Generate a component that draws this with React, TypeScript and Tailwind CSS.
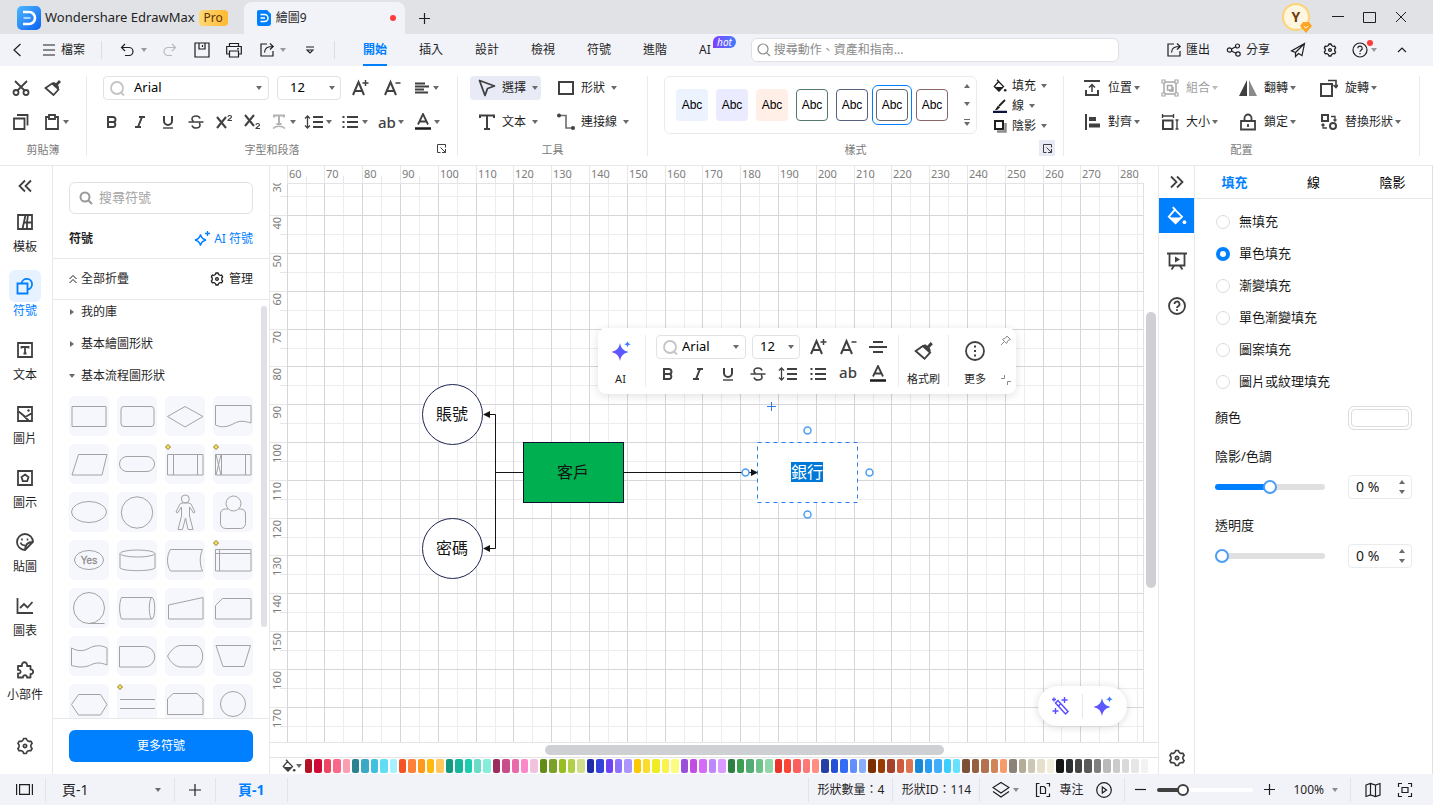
import React, { useEffect, useRef, useState } from 'react';
import { RiSettings3Line } from 'react-icons/ri';

interface IconProps {
  w?: number;
  h?: number;
  sw?: number;
  className?: string;
  children?: React.ReactNode;
}

const Ic: React.FC<IconProps> = ({ w = 18, h, sw = 2, className = '', children }) => (
  <svg
    width={w}
    height={h ?? w}
    viewBox={`0 0 ${w} ${h ?? w}`}
    fill="none"
    stroke="currentColor"
    strokeWidth={sw}
    className={`shrink-0 ${className}`}
    aria-hidden="true"
  >
    {children}
  </svg>
);

const Caret: React.FC<{ className?: string }> = ({ className = 'text-[#6b6b6b]' }) => (
  <svg width="6" height="4" viewBox="0 0 6 4" className={`shrink-0 ${className}`} aria-hidden="true">
    <path d="M0 0h6L3 4z" fill="currentColor" />
  </svg>
);

const Launcher = () => (
  <Ic w={9} sw={1}>
    <path d="M8.500 3.500V.5h-8v8h3M3.500 3.500l5 5M8.500 5v3.500H5" />
  </Ic>
);

const ExportIcon = () => (
  <Ic w={16} sw={1.2}>
    <path d="M8 2H2v12h12V9M5.500 10.500C5.500 6 9 4.500 14 4.500M11 1.500l3.200 3L11 7.500" />
  </Ic>
);

const BrushIcon: React.FC<{ w?: number }> = ({ w = 18 }) => (
  <svg width={w} height={w} viewBox="0 0 18 18" fill="none" stroke="currentColor" strokeWidth="1.7" className="shrink-0" aria-hidden="true">
    <path d="M1.500 9L8 4.500l6.500 6L9.500 16z" />
    <path d="M7.500 4L10 3l2 1.200L15 1l2 2-3 3 1 2-.5 3z" fill="currentColor" stroke="none" />
  </svg>
);

const BucketIcon: React.FC<{ w?: number }> = ({ w = 14 }) => (
  <svg width={w} height={w} viewBox="0 0 14 14" fill="none" stroke="currentColor" strokeWidth="1.3" className="shrink-0" aria-hidden="true">
    <path d="M5.500 2.500L10.500 7.500 6 12 1.300 7.500zM4 .8l2 2" />
    <path d="M1.500 8h9L6 12.500z" fill="currentColor" stroke="none" />
    <circle cx="12.200" cy="11.300" r="1.300" fill="currentColor" stroke="none" />
  </svg>
);

const LetterSize: React.FC<{ plus?: boolean }> = ({ plus }) => (
  <Ic>
    <path d="M2 16L7.500 3 13 16M4 12h7" />
    <path d={plus ? 'M11.500 4h6M14.500 1v6' : 'M12.500 4h5'} strokeWidth="1.500" />
  </Ic>
);

const BoldIcon = () => (
  <Ic w={14}><path d="M3 2h5a2.400 2.400 0 0 1 0 5H3zM3 7h5.500a2.600 2.600 0 0 1 0 5H3z" /></Ic>
);
const ItalicIcon = () => (
  <Ic w={14}><path d="M6 2h6M2 12h6M9 2L5 12" /></Ic>
);
const UnderlineIcon = () => (
  <Ic w={14}>
    <path d="M3 1v5a4 4 0 0 0 8 0V1" />
    <path d="M2 13h10" strokeWidth="1.400" />
  </Ic>
);
const StrikeIcon = () => (
  <Ic w={16} sw={1.6}><path d="M12 4.500C11.500 2.800 10 2 8 2 5.500 2 4 3.200 4 5c0 1 .6 1.700 1.500 2M4 11.500C4.500 13.200 6 14 8 14c2.500 0 4-1.200 4-3 0-.8-.3-1.400-.8-2M.5 8h15" /></Ic>
);
const LineSpacingIcon = () => (
  <Ic w={20} h={16} sw={1.8}>
    <path d="M9 3h10M9 8h10M9 13h10" />
    <path d="M3.500 2v12M1 4.500L3.500 2 6 4.500M1 11.500L3.500 14 6 11.500" strokeWidth="1.300" />
  </Ic>
);
const ListIcon = () => (
  <Ic w={16}><path d="M5 3h11M5 8h11M5 13h11M.5 3h2M.5 8h2M.5 13h2" strokeWidth="1.800" /></Ic>
);
const FontColorIcon = () => (
  <Ic>
    <path d="M4 11.500L9 1l5 10.500M5.800 8.500h6.400" strokeWidth="1.800" />
    <path d="M1 15.500h16" strokeWidth="2.500" stroke="#1a1a1a" />
  </Ic>
);

const Spark: React.FC<{ w?: number; id: string }> = ({ w = 20, id }) => (
  <svg width={w} height={w} viewBox="0 0 20 20" className="shrink-0" aria-hidden="true">
    <defs>
      <linearGradient id={id} x1="0" y1="1" x2="1" y2="0">
        <stop offset="0" stopColor="#7a45ff" />
        <stop offset="1" stopColor="#3d6bff" />
      </linearGradient>
    </defs>
    <path d="M9 2c1.200 5.500 3 7.300 8.500 9-5.500 1.700-7.300 3.500-8.500 9-1.200-5.500-3-7.300-8.500-9C6 9.300 7.800 7.500 9 2z" fill={`url(#${id})`} />
    <path d="M16.500 0c.4 2 1 2.600 3.300 3.200-2.300.6-2.900 1.200-3.300 3.300-.4-2.100-1-2.700-3.300-3.300C15.500 2.600 16.100 2 16.500 0z" fill="#3d7bff" />
  </svg>
);

const Divider = () => <span className="h-[18px] w-px shrink-0 bg-[#dcdde2]" />;

const TitleBar = () => (
  <header className="flex h-[34px] items-end bg-[#e1e2e6] text-[#1f1f1f]">
    <div className="flex h-8 items-center pl-[17px]">
      <svg width="24" height="24" viewBox="0 0 24 24" aria-hidden="true">
        <defs>
          <linearGradient id="brand" x1="0" y1="0" x2="1" y2="1">
            <stop offset="0" stopColor="#4db8ff" />
            <stop offset="1" stopColor="#0a62f5" />
          </linearGradient>
        </defs>
        <rect width="24" height="24" rx="5" fill="url(#brand)" />
        <path d="M6 6h6a6 6 0 0 1 0 12H6" fill="none" stroke="#fff" strokeWidth="2.600" />
        <path d="M6.500 12h7" stroke="#a9d4ff" strokeWidth="2.200" />
      </svg>
      <h1 className="ml-1 text-[13px]">Wondershare EdrawMax</h1>
      <span className="ml-1 h-4 rounded bg-gradient-to-r from-[#ffd873] to-[#ffb92b] px-[5px] text-xs leading-4 text-[#5c3205]">Pro</span>
    </div>
    <div className="ml-4 flex h-8 w-[161px] items-center rounded-t-lg bg-[#f2f3f9] px-3 text-xs">
      <svg width="16" height="16" viewBox="0 0 16 16" className="mr-1" aria-hidden="true">
        <path d="M3 0h8l4 4v9a3 3 0 0 1-3 3H3a2 2 0 0 1-2-2V2a2 2 0 0 1 2-2z" fill="#0080ff" />
        <path d="M4.500 4.500h4a3.500 3.500 0 0 1 0 7h-4M4.500 8h4.500" fill="none" stroke="#fff" strokeWidth="1.500" />
      </svg>
      <span>繪圖9</span>
      <span className="ml-auto mr-[-3px] h-1.5 w-1.5 rounded-full bg-[#ff3b3b]" />
    </div>
    <button className="ml-3.5 flex h-8 items-center" aria-label="新增">
      <Ic w={11} sw={1.200}><path d="M5.500 0v11M0 5.500h11" /></Ic>
    </button>
    <div className="ml-auto flex h-full items-center pr-[26px]">
      <div className="relative mr-[22px] flex h-7 w-7 items-center justify-center rounded-full border-2 border-[#ffd375] bg-[#fff6df] text-sm font-bold text-[#6b3d0c]">
        Y
        <svg width="12" height="11" viewBox="0 0 12 11" className="absolute -bottom-1 -right-1" aria-hidden="true">
          <path d="M3 .5h6L11.500 4 6 10.500.5 4z" fill="#ffa51f" stroke="#f59300" strokeWidth=".6" />
          <path d="M3.800 4L6 6.200 8.200 4" fill="none" stroke="#fff" />
        </svg>
      </div>
      <button aria-label="最小化"><Ic w={12} sw={1}><path d="M0 5.500h12" /></Ic></button>
      <button className="ml-[19px]" aria-label="最大化"><Ic w={13} h={11} sw={1}><path d="M.5.5h12v10H.5z" /></Ic></button>
      <button className="ml-[19px]" aria-label="關閉"><Ic w={12} sw={1}><path d="M1 1l10 10M11 1L1 11" /></Ic></button>
    </div>
  </header>
);

const menuTabs = ['開始', '插入', '設計', '檢視', '符號', '進階'];

const MenuBar: React.FC<{ tab: string; onTab: (t: string) => void }> = ({ tab, onTab }) => (
  <nav className="flex h-8 items-center bg-[#f2f3f9] pl-3 pr-[26px] text-xs text-[#1f1f1f]">
    <button aria-label="返回"><Ic w={10} h={14} sw={1.200}><path d="M8.500 1L2 7l6.500 6" /></Ic></button>
    <button className="ml-[21px] flex items-center gap-1.5">
      <Ic w={12} sw={1.200}><path d="M0 1h12M0 6h12M0 11h12" /></Ic>
      檔案
    </button>
    <div className="ml-4 flex items-center"><Divider /></div>
    <button className="ml-[18px] flex items-center gap-[7px]" aria-label="復原">
      <Ic w={14} sw={1.200}><path d="M5 1L1.500 4.500 5 8M1.500 4.500H9a4 4 0 0 1 0 8H5" /></Ic>
      <Caret className="text-[#999]" />
    </button>
    <button className="ml-4 text-[#b9bac0]" aria-label="重做">
      <Ic w={14} sw={1.200}><path d="M9 1l3.500 3.500L9 8M12.500 4.500H5a4 4 0 0 0 0 8h4" /></Ic>
    </button>
    <button className="ml-[17px]" aria-label="儲存">
      <Ic w={16} sw={1.200}><path d="M1 1h14v14H1zM5 1v6h6V1M8.500 3v2" /></Ic>
    </button>
    <button className="ml-4" aria-label="列印">
      <Ic w={16} sw={1.200}><path d="M3.500 4.500v-3h9v3M3.500 12H.7V4.500h14.600V12h-2.800M3.500 9h9v6h-9zM11 6.800h2" /></Ic>
    </button>
    <button className="ml-[17px] flex items-center gap-[5px]" aria-label="分享檔案">
      <ExportIcon />
      <Caret className="text-[#999]" />
    </button>
    <button className="ml-5" aria-label="自訂工具列">
      <Ic w={8} sw={1.100}><path d="M0 1h8M1 4l3 3 3-3z" /></Ic>
    </button>
    <div className="ml-5 flex items-center"><Divider /></div>
    <div className="ml-7 flex gap-8">
      {menuTabs.map((t) => (
        <button
          key={t}
          onClick={() => onTab(t)}
          className={`h-8 border-b-2 pt-0.5 ${tab === t ? 'border-[#0080ff] font-bold text-[#0080ff]' : 'border-transparent'}`}
        >
          {t}
        </button>
      ))}
      <button className="relative h-8">
        AI
        <span className="absolute left-3.5 top-0.5 h-3 rounded-full rounded-bl-none bg-gradient-to-r from-[#7a3dff] to-[#3d7bff] px-1 text-[10px] italic leading-3 text-white">hot</span>
      </button>
    </div>
    <label className="ml-10 flex h-6 flex-1 items-center gap-[3px] rounded-md border border-[#dfe0e6] bg-white px-[5px]">
      <Ic w={14} sw={1.200} className="text-[#8c8c8c]"><circle cx="6" cy="6" r="5" /><path d="M9.800 9.800L13 13" /></Ic>
      <input type="text" aria-label="搜尋動作" placeholder="搜尋動作、資產和指南..." className="w-full outline-none placeholder:text-[#8a8a8a]" />
    </label>
    <button className="ml-[47px] flex items-center gap-1"><ExportIcon />匯出</button>
    <button className="ml-4 flex items-center gap-1">
      <Ic w={16} sw={1.200}>
        <circle cx="3.500" cy="8" r="2.200" /><circle cx="11.500" cy="4" r="2" /><circle cx="12" cy="12" r="2.200" /><path d="M5.500 7l4.200-2.200M5.500 9l4.500 2.200" />
      </Ic>
      分享
    </button>
    <button className="ml-5" aria-label="傳送">
      <Ic w={16} sw={1.200}><path d="M14.500 1.500L1.500 9l4 1.500v4l3-3 3.500 2zM14.500 1.500L5.500 10.500" /></Ic>
    </button>
    <button className="ml-4" aria-label="設定"><RiSettings3Line size={16} /></button>
    <button className="relative ml-3.5 flex items-center gap-[3px]" aria-label="說明">
      <Ic w={16} sw={1.200}><circle cx="8" cy="8" r="7" /><path d="M5.800 6.300a2.200 2.200 0 1 1 3.200 2c-.7.4-1 .8-1 1.500M8 11v1.300" /></Ic>
      <Caret className="text-[#999]" />
      <span className="absolute -top-0.5 right-1 h-1.5 w-1.5 rounded-full bg-[#ff3b3b]" />
    </button>
    <button className="ml-5" aria-label="收合功能區"><Ic w={10} h={6} sw={1.200}><path d="M1 5l4-4 4 4" /></Ic></button>
  </nav>
);

interface GroupProps {
  title: string;
  className?: string;
  launcher?: 'plain' | 'filled';
  children: React.ReactNode;
}

const Group: React.FC<GroupProps> = ({ title, className = '', launcher, children }) => (
  <section className={`relative flex h-20 flex-col border-r border-[#ebebee] ${className}`}>
    {children}
    <p className="mt-auto text-center text-[11px] leading-3 text-[#7a7a7a]">{title}</p>
    {launcher && (
      <button
        className={`absolute bottom-0 right-2 flex h-4 w-4 items-center justify-center text-[#404040] ${launcher === 'filled' ? 'bg-[#e8ebf5]' : ''}`}
        aria-label={`${title}設定`}
      >
        <Launcher />
      </button>
    )}
  </section>
);

interface ToolProps {
  label: string;
  icon: React.ReactNode;
  className?: string;
}

const ToolButton: React.FC<ToolProps> = ({ label, icon, className = '' }) => (
  <button className={`flex h-6 items-center gap-1.5 rounded pl-2 ${className}`}>
    {icon}
    {label}
    <Caret />
  </button>
);

const ArrangeButton: React.FC<ToolProps> = ({ label, icon, className = '' }) => (
  <button className={`flex h-6 items-center gap-0.5 ${className}`}>
    <span className="mr-[5px] text-[#404040]">{icon}</span>
    {label}
    <Caret />
  </button>
);

const DropIcon: React.FC<{ label: string; className?: string; children: React.ReactNode }> = ({ label, className = '', children }) => (
  <button className={`flex h-6 items-center ${className}`} aria-label={label}>
    {children}
    <Caret />
  </button>
);

const FontSelect: React.FC<{ className?: string; selectClass?: string }> = ({ className = '', selectClass = 'pl-[9px]' }) => (
  <label className={`flex h-6 items-center rounded border border-[#e2e2e6] bg-white pl-1.5 pr-1.5 ${className}`}>
    <Ic w={15} sw={1.800} className="text-[#c4c4c8]"><circle cx="7" cy="7" r="6" /><path d="M11 11.500l3 3" /></Ic>
    <select aria-label="字型" className={`w-full appearance-none text-[13px] text-black outline-none ${selectClass}`}>
      <option>Arial</option>
    </select>
    <Caret />
  </label>
);

const SizeSelect: React.FC<{ className?: string }> = ({ className = '' }) => (
  <label className={`flex h-6 items-center rounded border border-[#e2e2e6] bg-white pr-[5px] ${className}`}>
    <select aria-label="字型大小" className="w-full appearance-none text-[13px] text-black outline-none">
      <option>12</option>
    </select>
    <Caret />
  </label>
);

const styleSwatches = [
  'bg-[#ecf3ff]',
  'bg-[#ebebff]',
  'bg-[#ffefe6]',
  'border border-[#53786f]',
  'border border-[#56617f]',
  'border border-[#666]',
  'border border-[#8a6666]',
];

const Ribbon = () => {
  const [style, setStyle] = useState(5);
  return (
    <div className="flex h-[100px] border-b border-[#e8e8ea] bg-white pt-2.5 pr-[13px] text-xs text-[#1f1f1f]">
      <Group title="剪貼簿" className="w-[87px] gap-2.5">
        <div className="flex h-6 items-center gap-3.5 pl-3 text-[#404040]">
          <button aria-label="剪下">
            <Ic sw={1.800}><circle cx="4" cy="13.500" r="2.500" /><circle cx="14" cy="13.500" r="2.500" /><path d="M3 2l9.500 9.500M15 2L5.500 11.500" /></Ic>
          </button>
          <button aria-label="格式刷"><BrushIcon /></button>
        </div>
        <div className="flex h-6 items-center gap-3.5 pl-3 text-[#404040]">
          <button aria-label="複製"><Ic sw={1.800}><path d="M2 5.500h10.500V16H2zM5 2h10.500v10.500" /></Ic></button>
          <button aria-label="貼上" className="flex items-center gap-[3px]">
            <Ic w={16} sw={1.800}><path d="M5 3H2v12h12V3h-3M5 1h6v4H5z" /></Ic>
            <Caret />
          </button>
        </div>
      </Group>

      <Group title="字型和段落" className="w-[371px] gap-2.5" launcher="plain">
        <div className="flex h-6 items-center pl-4 text-[#404040]">
          <FontSelect className="w-[166px]" />
          <SizeSelect className="ml-2 w-16 pl-3" />
          <button className="ml-2.5" aria-label="放大字型"><LetterSize plus /></button>
          <button className="ml-3.5" aria-label="縮小字型"><LetterSize /></button>
          <DropIcon label="對齊方式" className="ml-3.5 gap-1">
            <Ic w={14}><path d="M0 2.500h10M0 5.500h14M0 8.500h9M0 11.500h13" strokeWidth="1.800" /></Ic>
          </DropIcon>
        </div>
        <div className="flex h-6 items-center pl-[11px] text-[#404040]">
          <button className="flex w-7 justify-center" aria-label="粗體"><BoldIcon /></button>
          <button className="flex w-7 justify-center" aria-label="斜體"><ItalicIcon /></button>
          <button className="flex w-7 justify-center" aria-label="底線"><UnderlineIcon /></button>
          <button className="flex w-7 justify-center" aria-label="刪除線"><StrikeIcon /></button>
          <button className="flex w-7 justify-center" aria-label="上標">
            <Ic><path d="M2 4l9 11M11 4L2 15" /><path d="M13 4c0-2 3.500-2 3.500 0 0 1-3.500 2.500-3.500 3.500H17" strokeWidth="1.200" /></Ic>
          </button>
          <button className="flex w-7 justify-center" aria-label="下標">
            <Ic><path d="M2 2l9 11M11 2L2 13" /><path d="M13 12c0-2 3.500-2 3.500 0 0 1-3.500 2.500-3.500 3.500H17" strokeWidth="1.200" /></Ic>
          </button>
          <DropIcon label="文字效果" className="ml-1 gap-0.5 text-[#b3b3b3]">
            <Ic><path d="M4 4.500V2.500h10v2M9 2.500V11M6.500 11h5" /><path d="M3 15.500c3-3 9-3 12 0" strokeWidth="1.500" /></Ic>
          </DropIcon>
          <DropIcon label="行距" className="ml-2 gap-0.5"><LineSpacingIcon /></DropIcon>
          <DropIcon label="項目符號" className="ml-2.5 gap-1"><ListIcon /></DropIcon>
          <DropIcon label="大小寫" className="ml-2.5 gap-0.5"><span className="text-[15px] font-medium">ab</span></DropIcon>
          <DropIcon label="字型顏色" className="ml-2.5 gap-0.5"><FontColorIcon /></DropIcon>
        </div>
      </Group>

      <Group title="工具" className="w-[190px] gap-2.5">
        <div className="flex items-center gap-2 pl-3">
          <ToolButton label="選擇" className="w-[71px] bg-[#e8ebf5]" icon={<Ic className="text-[#404040]"><path d="M1.500 1.500l15 5.500-7 2.500-2.500 7z" strokeLinejoin="round" strokeWidth="1.800" /></Ic>} />
          <ToolButton label="形狀" icon={<Ic className="text-[#404040]"><path d="M2 3h14v12H2z" /></Ic>} />
        </div>
        <div className="flex items-center gap-2 pl-3">
          <ToolButton label="文本" className="w-[71px]" icon={<Ic className="text-[#404040]"><path d="M2 5V2.500h14V5M9 2.500V16M6 16h6" /></Ic>} />
          <ToolButton
            label="連接線"
            icon={
              <Ic className="text-[#6b6b6b]">
                <path d="M3 2.500h6V15h6" strokeWidth="1.600" />
                <circle cx="2" cy="2.500" r="2" fill="#404040" stroke="none" /><circle cx="16" cy="15" r="2" fill="#404040" stroke="none" />
              </Ic>
            }
          />
        </div>
      </Group>

      <Group title="樣式" className="min-w-[416px] flex-1" launcher="filled">
        <div className="flex pl-4 pr-4">
          <div className="flex h-[58px] flex-1 items-center rounded-md border border-[#ebebee] pl-[7px] pr-1.5">
            {styleSwatches.map((s, i) => (
              <button
                key={s}
                onClick={() => setStyle(i)}
                className={`flex h-10 w-10 items-center justify-center rounded-md border ${style === i ? 'border-[#0080ff]' : 'border-transparent'}`}
              >
                <span className={`flex h-8 w-8 shrink-0 items-center justify-center rounded font-['Liberation_Sans',sans-serif] text-black ${s}`}>Abc</span>
              </button>
            ))}
            <div className="ml-auto flex h-full flex-col items-center justify-between py-[7px] text-[#6b6b6b]">
              <button aria-label="上一列" className="rotate-180"><Caret /></button>
              <button aria-label="下一列"><Caret /></button>
              <button aria-label="更多樣式"><Ic w={6} h={7} sw={1}><path d="M0 .5h6" /><path d="M0 3h6L3 7z" fill="currentColor" stroke="none" /></Ic></button>
            </div>
          </div>
          <div className="ml-4 flex h-[58px] flex-col justify-between">
            <button className="flex h-5 items-center gap-[5px] leading-5"><BucketIcon />填充<Caret /></button>
            <button className="flex h-5 items-center gap-[5px] leading-5">
              <Ic w={14}><path d="M12 1L6 7" strokeWidth="1.800" /><path d="M5 6.500l2 2-3 2.500H2z" fill="currentColor" stroke="none" /><path d="M0 13h14" stroke="#0b1340" strokeWidth="2.500" /></Ic>
              線<Caret />
            </button>
            <button className="flex h-5 items-center gap-[5px] leading-5">
              <Ic w={14}><path d="M4 12.500h8.500V4" stroke="#8c8c8c" strokeWidth="2.500" /><path d="M2 2h8v8H2z" /></Ic>
              陰影<Caret />
            </button>
          </div>
        </div>
      </Group>

      <Group title="配置" className="w-[356px]">
        <div className="grid grid-cols-[78px_78px_81px_auto] gap-y-2.5 pl-[19px]">
          <ArrangeButton label="位置" icon={<Ic><path d="M1 2h16M3 11v5h12v-5M3 16h12" /><path d="M9 13V6M6 8.500L9 5.500l3 3" strokeWidth="1.500" /></Ic>} />
          <ArrangeButton label="組合" className="opacity-45" icon={<Ic><path d="M3 3h12v12H3z" strokeWidth="1.500" /><path d="M6.500 6.500H11V11H6.500zM8 12h4V8" strokeWidth="1.500" /><path d="M1 1h3v3H1zM14 1h3v3h-3zM1 14h3v3H1zM14 14h3v3h-3z" fill="#fff" strokeWidth="1.200" /></Ic>} />
          <ArrangeButton label="翻轉" icon={<Ic><path d="M8 1v16H0z" fill="currentColor" stroke="none" /><path d="M10 1v16h8z" fill="#8a8a8a" stroke="none" /></Ic>} />
          <ArrangeButton label="旋轉" icon={<Ic><path d="M1 5h11v12H1z" /><path d="M8 1.500h8V8M13.500 6l2.500 2.500L18 6" strokeWidth="1.600" /></Ic>} />
          <ArrangeButton label="對齊" icon={<Ic><path d="M3 1v16" /><path d="M6 6h7M6 12.500h11" strokeWidth="4" /></Ic>} />
          <ArrangeButton label="大小" icon={<Ic><path d="M2 7.500h9.500V16H2z" /><path d="M1 3h12M1.500 1v4M12.500 1v4M16 7v9M14.500 7h3M14.500 16h3" strokeWidth="1.400" /></Ic>} />
          <ArrangeButton label="鎖定" icon={<Ic><path d="M2 8h14v8.500H2zM5.500 8V5a3.500 3.500 0 0 1 7 0v3M9 11v3" strokeWidth="1.800" /></Ic>} />
          <ArrangeButton label="替換形狀" icon={<Ic><path d="M2 2h6v6H2z" /><circle cx="13" cy="13" r="3" /><path d="M11 3.500h4V8M13.500 6.500L15 8l1.500-1.500M7 15H3v-4M1.500 12.500L3 11l1.500 1.500" strokeWidth="1.300" /></Ic>} />
        </div>
      </Group>
    </div>
  );
};

const navItems = [
  { label: '模板', icon: <path d="M2 2h14v14H2zM9.500 2L6.500 16M8 9.500h8M12 2l-1 7.500V16" strokeWidth="1.800" /> },
  { label: '符號', icon: <><path d="M1.500 6.500h10v10h-10z" strokeWidth="1.800" /><path d="M5.500 6.500a5.300 5.300 0 1 1 6 6" strokeWidth="1.800" /></> },
  { label: '文本', icon: <path d="M2 2h14v14H2zM5.500 7.500V6h7v1.500M9 6v6.500M7.500 12.500h3" strokeWidth="1.800" /> },
  { label: '圖片', icon: <><path d="M2 2h14v14H2zM2 6l5 4 2.500 2L16 8M7 10l6 6" strokeWidth="1.800" /><circle cx="12.500" cy="5.500" r="1.200" fill="currentColor" stroke="none" /></> },
  { label: '圖示', icon: <path d="M2 2h14v14H2zM9 5.500l3.500 2.600-1.300 4h-4.400l-1.300-4z" strokeWidth="1.800" /> },
  { label: '貼圖', icon: <><path d="M17 9a8 8 0 1 0-8 8zM17 9c-5 0-8 3-8 8" strokeWidth="1.800" /><path d="M4.500 9.500c1 2.500 3 3 4.500 2.700M6 5.500v2M11.500 5.500v2" strokeWidth="1.600" /></> },
  { label: '圖表', icon: <path d="M1.500 1v15H17M4 11l4-4 3.500 3.500L16.500 5" strokeWidth="1.800" /> },
  { label: '小部件', icon: <path d="M2 5h4c-1-5 6-5 5 0h3.500v3.500c3.500-.5 3.500 5 0 4.500V16.500H11c.5-3-4.500-3-4 0H2v-4c3.500.5 3.500-4 0-3.500z" strokeWidth="1.800" strokeLinejoin="round" /> },
];

const SideNav: React.FC<{ active: string; onSelect: (s: string) => void }> = ({ active, onSelect }) => (
  <nav className="flex w-[53px] shrink-0 flex-col border-r border-[#e8e8ea] bg-white pr-0.5 text-xs text-[#1f1f1f]">
    <button className="flex h-10 items-center justify-center text-[#404040]" aria-label="收合">
      <Ic w={14}><path d="M7 1.500L1.500 7 7 12.500M13 1.500L7.500 7l5.500 5.500" strokeWidth="1.800" /></Ic>
    </button>
    <div className="flex min-h-0 flex-col gap-3.5 overflow-hidden">
      {navItems.map((n) => (
        <button key={n.label} onClick={() => onSelect(n.label)} className={`flex flex-col items-center ${active === n.label ? 'text-[#0080ff]' : ''}`}>
          <span className={`flex h-8 w-8 items-center justify-center rounded-md ${active === n.label ? 'bg-[#e6f2ff]' : 'text-[#404040]'}`}>
            <Ic>{n.icon}</Ic>
          </span>
          <span className="whitespace-nowrap leading-[18px]">{n.label}</span>
        </button>
      ))}
    </div>
    <button className="mt-auto flex h-14 items-center justify-center text-[#404040]" aria-label="設定"><RiSettings3Line size={20} /></button>
  </nav>
);

const shapes: { draw: React.ReactNode; mark?: boolean }[] = [
  { draw: <path d="M3 10.500h34v20H3z" /> },
  { draw: <rect x="4" y="10.500" width="33" height="20" rx="3" /> },
  { draw: <path d="M2.500 20.500L20 10.500l18 10L20 31z" /> },
  { draw: <path d="M2.500 9.500H38V27c-7-2-11-3-18 1-7 3.500-12 3.500-17.500 1z" /> },
  { draw: <path d="M9.500 10.500H38L33 31H3z" /> },
  { draw: <rect x="2.500" y="12.500" width="35" height="15" rx="7.500" /> },
  { mark: true, draw: <path d="M2.500 10.500H38V31H2.500zM8.500 10.500V31M32.500 10.500V31" /> },
  { mark: true, draw: <path d="M2.500 10.500H38V31H2.500zM8.500 10.500V31M32.500 10.500V31M3 10.500L8 31M8 10.500L3 31" /> },
  { draw: <ellipse cx="20" cy="20" rx="17.500" ry="10.500" /> },
  { draw: <circle cx="20" cy="20.500" r="15.700" /> },
  { draw: <><circle cx="20.300" cy="7" r="4" /><path d="M15 12l-4 8 1.500 1 4-6v9l-3.500 13.500h4.500L20.500 26l2.500 11.500h5L24.500 24v-9l4 6 1.500-1-4-8c-1.500-1.500-9.500-1.500-11 0z" /></> },
  { draw: <><circle cx="20.500" cy="11.500" r="7.500" /><path d="M15 17h-3a5 5 0 0 0-4.500 5v9.500a5 5 0 0 0 5 5h15a5 5 0 0 0 5-5V22a5 5 0 0 0-4.500-5h-2" /></> },
  { draw: <><ellipse cx="20" cy="20" rx="14.500" ry="9.500" /><text x="20" y="24" textAnchor="middle" fontSize="10" fill="#8c8c8c" stroke="#8c8c8c" strokeWidth=".3" className="font-['Liberation_Sans',sans-serif]">Yes</text></> },
  { draw: <><ellipse cx="20.500" cy="13.500" rx="17.500" ry="3.500" /><path d="M3 13.500V28c3 3.500 32 3.500 35 0V13.500" /></> },
  { draw: <path d="M5.500 9.500h32c-3 6-3 15 0 21.500h-32c-4-6-4-15.500 0-21.500z" /> },
  { mark: true, draw: <path d="M2.500 9.500H38V31H2.500zM2.500 13.500H38M6.500 9.500V31" /> },
  { draw: <><circle cx="20" cy="20" r="15.500" /><path d="M20 35.500h15.500" /></> },
  { draw: <><path d="M35 9.500H4.500c-2.500 5-2.500 16 0 21.500H35" /><ellipse cx="35" cy="20.250" rx="2.700" ry="10.700" /></> },
  { draw: <path d="M3.500 17L38 9.500V31H3.500z" /> },
  { draw: <path d="M9.500 10.500H38V31H2.500V17.500z" /> },
  { draw: <path d="M2.500 12c6 3 11 4 18 0 6-3 12-3 17.500 0v17c-6-2.500-11-3-17.500.5-7 2.500-12 1.500-18 0z" /> },
  { draw: <path d="M2.500 10.500h25a10.250 10.250 0 0 1 0 20.500h-25z" /> },
  { draw: <path d="M2.500 20C7 13 11 10 15 9.500h17c7.500 3 7.500 18.500 0 21.500H15C10 30 6 27 2.500 20z" /> },
  { draw: <path d="M3 9.500h34.500L31 30.500H10z" /> },
  { draw: <path d="M2.500 20.500l7-10h22l6.500 10L31.500 31h-22z" /> },
  { mark: true, draw: <path d="M3 15.500h35M3 24.500h35" /> },
  { draw: <path d="M8 9.500h24l6 5.500v15.500H2.500V15z" /> },
  { draw: <circle cx="20" cy="20" r="12.500" /> },
];

const SymbolPanel = () => (
  <aside className="flex w-[217px] shrink-0 flex-col border-r border-[#e8e8ea] bg-white text-xs text-[#1f1f1f]">
    <div className="flex h-[93px] shrink-0 flex-col border-b border-[#e8e8ea] px-4 pt-4">
      <label className="flex h-8 items-center gap-1.5 rounded-md border border-[#e2e2e6] px-[9px]">
        <Ic w={14} sw={2} className="text-[#999]"><circle cx="6" cy="6" r="4.500" /><path d="M9.500 9.500l3.500 3.500" /></Ic>
        <input type="text" aria-label="搜尋符號" placeholder="搜尋符號" className="w-full text-[13px] outline-none placeholder:text-[#a3a3a3]" />
      </label>
      <div className="mt-[17px] flex items-center justify-between">
        <h2 className="font-bold">符號</h2>
        <button className="flex items-center gap-1 text-[#0080ff]">
          <Ic w={16} sw={1.300}>
            <path d="M6.500 3.500c.8 3.500 2 4.700 5.500 5.500-3.500.8-4.700 2-5.500 5.500C5.700 11 4.500 9.800 1 9c3.500-.8 4.700-2 5.500-5.500zM13.500 0v5M11 2.500h5" />
          </Ic>
          AI 符號
        </button>
      </div>
    </div>
    <div className="flex h-[41px] shrink-0 items-center justify-between border-b border-[#e8e8ea] px-4">
      <button className="flex items-center gap-1">
        <Ic w={8} h={10} sw={1}><path d="M.5 5L4 1.500 7.500 5M.5 9L4 5.500 7.500 9" /></Ic>
        全部折疊
      </button>
      <button className="flex items-center gap-1"><RiSettings3Line size={16} />管理</button>
    </div>
    <div className="flex min-h-0 flex-1">
      <div className="flex min-h-0 flex-1 flex-col gap-2 overflow-hidden pl-4">
        {['我的庫', '基本繪圖形狀', '基本流程圖形狀'].map((s, i) => (
          <button key={s} className="flex h-6 shrink-0 items-center gap-1.5">
            <span className={`flex w-1.5 justify-center ${i < 2 ? '-rotate-90' : ''}`}><Caret /></span>
            {s}
          </button>
        ))}
        <div className="grid shrink-0 grid-cols-[repeat(4,40px)] gap-2">
          {shapes.map((s, i) => (
            <button key={i} aria-label={`形狀 ${i + 1}`} className="h-10 w-10 rounded-md bg-[#f6f7fc]">
              <svg width="40" height="40" viewBox="0 0 40 40" fill="none" stroke="#a3a3a3" aria-hidden="true">
                {s.draw}
                {s.mark && <path d="M3 .5L5.500 3 3 5.500.5 3z" fill="#ffe14d" stroke="#8a7a3a" />}
              </svg>
            </button>
          ))}
        </div>
      </div>
      <div className="w-2 pt-1.5"><div className="h-[321px] w-1.5 rounded-full bg-[#e0e0e6]" /></div>
    </div>
    <div className="h-14 shrink-0 border-t border-[#e8e8ea] px-4 pt-[11px]">
      <button className="h-8 w-full rounded-md bg-[#0080ff] text-white">更多符號</button>
    </div>
  </aside>
);

// 10 mm at 96 dpi
const STEP = 37.795;
const gx = (k: number) => Math.floor(0.2 + STEP * k) + 0.5;
const gy = (k: number) => Math.floor(STEP * k - 4.995) + 0.5;
const range = (n: number) => Array.from({ length: n }, (_, k) => k);
const columns = (width: number) => range(Math.ceil(width / STEP));
const rows = (height: number) => range(Math.ceil((height + 4.995) / STEP));

const RulerTop: React.FC<{ width: number }> = ({ width }) => (
  <svg className="h-[17px] min-w-0 flex-1 overflow-hidden" aria-hidden="true">
    {columns(width).map((k) => (
      <g key={k}>
        <path d={`M${gx(k)} 0V17`} stroke="#e6e6e9" />
        <path d={`M${gx(k + 0.5)} 10V17`} stroke="#e6e6e9" />
        {gx(k) + 20 < width && <text x={gx(k) + 1.5} y="12" fontSize="11" fill="#7d7d7d">{60 + k * 10}</text>}
      </g>
    ))}
  </svg>
);

const RulerLeft: React.FC<{ height: number }> = ({ height }) => (
  <svg className="h-full w-[17px] shrink-0 overflow-hidden" aria-hidden="true">
    {rows(height).map((k) => (
      <g key={k}>
        <path d={`M0 ${gy(k)}H17`} stroke="#e6e6e9" />
        <path d={`M10 ${gy(k + 0.5)}H17`} stroke="#e6e6e9" />
        {gy(k) + 20 < height && (
          <text textAnchor="end" fontSize="11" fill="#7d7d7d" transform={`translate(11 ${gy(k) + 1.5}) rotate(-90)`}>{30 + k * 10}</text>
        )}
      </g>
    ))}
  </svg>
);

const Diagram: React.FC<{ width: number; height: number }> = ({ width, height }) => (
  <svg className="absolute inset-0 h-full w-full" role="img" aria-label="繪圖9">
    {columns(width).map((k) => <path key={k} d={`M${gx(k + 0.5)} 0V${height}`} stroke="#ededef" />)}
    {rows(height).map((k) => <path key={k} d={`M0 ${gy(k + 0.5)}H${width}`} stroke="#ededef" />)}
    {columns(width).map((k) => <path key={k} d={`M${gx(k)} 0V${height}`} stroke="#d6d6d8" />)}
    {rows(height).map((k) => <path key={k} d={`M0 ${gy(k)}H${width}`} stroke="#d6d6d8" />)}
    <path d={`M0 .5H${width}`} stroke="#e4e4e7" />
    <path d="M236.500 289.500h-28M208.500 231.500v134M208.500 231.500h-7M208.500 365.500h-7M337 289.500h128" fill="none" stroke="#141414" />
    <path d="M196 231.500l7-3.500v7zM196 365.500l7-3.500v7zM471 289.500l-7-3.500v7z" fill="#141414" />
    <g fill="#fff" stroke="#1c2450">
      <circle cx="165.500" cy="231.500" r="30" />
      <circle cx="165.500" cy="365.500" r="30" />
    </g>
    <rect x="236.500" y="259.500" width="100" height="60" fill="#00b050" stroke="#0d1233" />
    <rect x="470.500" y="259.500" width="100" height="60" fill="#fff" stroke="#2a7de1" strokeDasharray="4 4" />
    <rect x="504" y="279" width="32" height="20" fill="#0078d7" />
    <g fontSize="16" textAnchor="middle" fill="#141414">
      <text x="165" y="237">賬號</text>
      <text x="165" y="371">密碼</text>
      <text x="286" y="295">客戶</text>
      <text x="520" y="295" fill="#fff">銀行</text>
    </g>
    <g fill="#fff" stroke="#4c9ff5" strokeWidth="1.500">
      <circle cx="520.500" cy="247.500" r="3.500" />
      <circle cx="458.500" cy="289.500" r="3.500" />
      <circle cx="582.500" cy="289.500" r="3.500" />
      <circle cx="520.500" cy="331.500" r="3.500" />
    </g>
    <path d="M480 223.500h9M484.500 219v9" stroke="#2a7de1" />
  </svg>
);

const FloatBar = () => (
  <div className="absolute left-[311px] top-[145px] flex h-[66px] w-[418px] rounded-lg bg-white py-[7px] text-[11px] text-[#1f1f1f] shadow-[0_2px_10px_rgba(0,0,0,0.12)]">
    <button className="flex w-12 flex-col items-center justify-between border-r border-[#ebebee] pt-1.5 pr-0.5">
      <Spark id="floatAi" />
      <span className="leading-4">AI</span>
    </button>
    <div className="flex w-[253px] flex-col gap-[3px] border-r border-[#ebebee] text-[#404040]">
      <div className="flex h-6 items-center pl-2.5">
        <FontSelect className="w-[90px]" selectClass="pl-1" />
        <SizeSelect className="ml-1.5 w-12 pl-[7px]" />
        <button className="ml-[9px]" aria-label="放大字型"><LetterSize plus /></button>
        <button className="ml-3" aria-label="縮小字型"><LetterSize /></button>
        <button className="ml-3" aria-label="置中"><Ic><path d="M4 4h10M0 9h18M4 14h10" strokeWidth="1.800" /></Ic></button>
      </div>
      <div className="flex h-6 items-center pl-[7px]">
        <button className="flex w-[30px] justify-center" aria-label="粗體"><BoldIcon /></button>
        <button className="flex w-[30px] justify-center" aria-label="斜體"><ItalicIcon /></button>
        <button className="flex w-[30px] justify-center" aria-label="底線"><UnderlineIcon /></button>
        <button className="flex w-[30px] justify-center" aria-label="刪除線"><StrikeIcon /></button>
        <button className="flex w-[30px] justify-center" aria-label="行距"><LineSpacingIcon /></button>
        <button className="flex w-[30px] justify-center" aria-label="項目符號"><ListIcon /></button>
        <button className="flex h-6 w-[30px] justify-center text-[15px] font-medium leading-5" aria-label="大小寫">ab</button>
        <button className="flex w-[30px] justify-center" aria-label="字型顏色"><FontColorIcon /></button>
      </div>
    </div>
    <button className="flex w-[50px] flex-col items-center justify-between border-r border-[#ebebee] pt-1.5">
      <span className="text-[#404040]"><BrushIcon w={20} /></span>
      <span className="leading-4">格式刷</span>
    </button>
    <button className="flex w-[52px] flex-col items-center justify-between pt-1.5">
      <Ic w={20} className="text-[#404040]">
        <circle cx="10" cy="10" r="9" strokeWidth="1.800" />
        <path d="M10 4.500v2M10 9v2M10 13.500v2" />
      </Ic>
      <span className="leading-4">更多</span>
    </button>
    <div className="flex flex-1 flex-col justify-between pb-0.5 text-[#8c8c8c]">
      <button aria-label="釘選"><Ic w={10} sw={1}><path d="M6 1l3.500 3.500L7 5.500 5.500 8.500l-4-4L4.500 3zM3.500 6.500L0 10" /></Ic></button>
      <button aria-label="精簡"><Ic w={10} sw={1}><path d="M0 3.500h3.500V0M10 6.500H6.500V10" /></Ic></button>
    </div>
  </div>
);

const palette =
  '#b31022 #cf0a36 #ec4864 #f9688a #fb9eb0 #2a8291 #3aa9c5 #41c1e0 #60dcf3 #a6f0ff #f35325 #ff8038 #ff981c #ffb90f #ffc75e #129a80 #17b59b #1bccb1 #6adbc6 #84eedb #9b2b60 #c84e8b #e969ab #fb89ca #f1c2de #628c17 #7aa228 #98bf22 #b1d047 #d0df8c #1f2caa #3442dc #6e43f5 #8f72fb #ac96fb #fbc900 #fcdc2a #efeb25 #f9f34b #fcfc80 #9a50d8 #c34de3 #d46cf7 #bf87fd #d99bff #2d8044 #3a9f50 #51ad74 #6cc288 #92d7a9 #ea3329 #fb4537 #fd5f60 #ff7878 #ff8d84 #2440a4 #2850d6 #336cf5 #648efb #88aef9 #7a3000 #983c00 #a5402a #d05a3c #dd7552 #1789d6 #269cf5 #41aefc #3ccefe #66e2ff #7b5138 #95603f #b3714f #d08659 #f89b6c #8c8278 #b3ac99 #cbc7b4 #e5dfcc #f3eedb #161616 #2b2e30 #444444 #5a5a5a #7f7f7f #bababa #cbcbcb #d9d9d9 #e6e6e6 #f2f2f2 #ffffff'.split(' ');

const Canvas = () => {
  const boardRef = useRef<HTMLDivElement>(null);
  const [size, setSize] = useState({ width: 0, height: 0 });

  // Redraw the rulers and the grid whenever the board changes size
  useEffect(() => {
    const board = boardRef.current;
    if (!board) return;
    const measure = () => setSize({ width: board.clientWidth, height: board.clientHeight });
    measure();
    const observer = new ResizeObserver(measure);
    observer.observe(board);
    return () => observer.disconnect();
  }, []);

  return (
    <main className="flex min-w-0 flex-1 flex-col bg-white">
      <div className="flex h-[17px] pl-[17px] pr-3.5"><RulerTop width={size.width} /></div>
      <div className="flex min-h-0 flex-1">
        <RulerLeft height={size.height} />
        <div ref={boardRef} className="relative min-w-0 flex-1 overflow-hidden border-r border-[#e0e0e3]">
          <Diagram width={size.width} height={size.height} />
          <FloatBar />
          <div className="absolute bottom-4 right-4 flex h-10 items-center rounded-full bg-white shadow-[0_1px_8px_rgba(0,0,0,0.15)]">
            <button className="flex h-6 w-[45px] items-center justify-center border-r border-[#e6e6ea]" aria-label="智慧繪圖">
              <Ic w={20} className="text-[#5a4dff]">
                <path d="M5.500 7L8 4.500 18 15.500 15.500 18zM8.500 10l2.500-2.500" strokeWidth="1.500" />
                <path d="M14.500 1v6M11.500 4h6M4 1.500v4M2 3.500h4M5.500 12v6M2.500 15h6" strokeWidth="1.400" />
              </Ic>
            </button>
            <button className="flex h-6 w-11 items-center justify-center pr-1" aria-label="AI 助手"><Spark id="chatAi" /></button>
          </div>
        </div>
        <div className="w-3.5 shrink-0 pl-0.5 pt-[129px]"><div className="h-[276px] w-2.5 rounded-full bg-[#cfd0d3]" /></div>
      </div>
      <div className="h-4 shrink-0 border-y border-[#e4e4e7] pl-[31%] pt-0.5"><div className="h-2.5 w-[65%] rounded-full bg-[#cfd0d3]" /></div>
      <div className="flex h-4 shrink-0 items-center pl-3">
        <button className="flex w-[23px] items-center text-[#404040]" aria-label="填充顏色"><BucketIcon /><Caret /></button>
        <div className="flex h-3.5 flex-1 gap-0.5">
          {palette.map((c) => (
            <button key={c} aria-label={c} className="h-full flex-1 rounded-xs" style={{ backgroundColor: c }} />
          ))}
        </div>
      </div>
    </main>
  );
};

const RightStrip = () => (
  <nav className="flex w-[37px] shrink-0 flex-col border-x border-[#e8e8ea] bg-white text-[#404040]">
    <button className="flex h-8 items-center justify-center" aria-label="展開">
      <Ic w={14}><path d="M1 1.500L6.500 7 1 12.500M7 1.500L12.500 7 7 12.500" strokeWidth="1.800" /></Ic>
    </button>
    <button className="flex h-[35px] items-center justify-center bg-[#0080ff] text-white" aria-label="填充"><BucketIcon w={20} /></button>
    <button className="mt-2.5 flex h-[35px] items-center justify-center" aria-label="簡報">
      <Ic w={20}>
        <path d="M0 2.500h20M2.500 2.500v12h15v-12M7 15l-2.500 3.500M13 15l2.500 3.500" strokeWidth="1.800" />
        <path d="M8 5.500l5 3-5 3z" fill="currentColor" stroke="none" />
      </Ic>
    </button>
    <button className="mt-2.5 flex h-[35px] items-center justify-center" aria-label="說明">
      <Ic w={20}><circle cx="10" cy="10" r="8" strokeWidth="1.800" /><path d="M7.500 8a2.500 2.500 0 1 1 3.700 2.200c-.9.5-1.200.9-1.200 1.800M10 13.200v1.800" strokeWidth="1.800" /></Ic>
    </button>
    <button className="mt-auto flex h-8 items-center justify-center" aria-label="設定"><RiSettings3Line size={20} /></button>
  </nav>
);

const fills = ['無填充', '單色填充', '漸變填充', '單色漸變填充', '圖案填充', '圖片或紋理填充'];

interface SliderRowProps {
  id: string;
  label: string;
  initial: number;
}

const SliderRow: React.FC<SliderRowProps> = ({ id, label, initial }) => {
  const [value, setValue] = useState(initial);
  return (
    <div>
      <label htmlFor={id} className="block leading-5">{label}</label>
      <div className="mt-[9px] flex h-6 items-center justify-between">
        <input
          id={id}
          type="range"
          value={value}
          onChange={(e) => setValue(Number(e.target.value))}
          className="h-1.5 w-[110px] appearance-none rounded-full [&::-webkit-slider-thumb]:h-3.5 [&::-webkit-slider-thumb]:w-3.5 [&::-webkit-slider-thumb]:appearance-none [&::-webkit-slider-thumb]:rounded-full [&::-webkit-slider-thumb]:border-2 [&::-webkit-slider-thumb]:border-[#4c9ff5] [&::-webkit-slider-thumb]:bg-white"
          style={{ background: `linear-gradient(to right, #0080ff ${value}%, #e0e0e0 ${value}%)` }}
        />
        <div className="flex h-6 w-16 items-center rounded border border-[#ebebee] bg-white pl-[7px] pr-1.5">
          <input type="text" aria-label={`${label}數值`} defaultValue="0 %" className="w-full min-w-0 text-sm outline-none" />
          <div className="flex flex-col gap-1.5">
            <button aria-label="增加" className="rotate-180"><Caret /></button>
            <button aria-label="減少"><Caret /></button>
          </div>
        </div>
      </div>
    </div>
  );
};

const FormatPanel = () => {
  const [fill, setFill] = useState('單色填充');
  return (
    <aside className="flex w-[238px] shrink-0 flex-col border-r border-[#e0e0e3] bg-white text-[13px] text-[#1a1a1a]">
      <div className="grid h-[33px] grid-cols-3 border-b border-[#e8e8ea] pt-0.5 text-black">
        <button className="font-bold text-[#0080ff]">填充</button>
        <button>線</button>
        <button>陰影</button>
      </div>
      <div className="flex flex-col px-[21px] pt-[7px]">
        {fills.map((f) => (
          <label key={f} className="flex h-8 items-center gap-[9px]">
            <input
              type="radio"
              name="fill"
              checked={fill === f}
              onChange={() => setFill(f)}
              className="h-3.5 w-3.5 appearance-none rounded-full border border-[#dcdcdf] bg-white checked:border-4 checked:border-[#0080ff]"
            />
            {f}
          </label>
        ))}
      </div>
      <div className="mt-2 flex h-6 items-center justify-between px-5">
        <span>顏色</span>
        <button aria-label="顏色" className="h-6 w-16 rounded-md border border-[#dcdcdf] p-0.5">
          <span className="block h-full rounded border border-[#dcdcdf] bg-white" />
        </button>
      </div>
      <div className="mt-4 flex flex-col gap-4 px-5">
        <SliderRow id="shade" label="陰影/色調" initial={50} />
        <SliderRow id="opacity" label="透明度" initial={0} />
      </div>
    </aside>
  );
};

const StatusBar = () => {
  const [zoom, setZoom] = useState(23);
  return (
    <footer className="flex h-[31px] shrink-0 items-center bg-[#f2f3f9] pl-4 pr-5 text-xs text-[#1f1f1f]">
      <button aria-label="頁面檢視"><Ic w={17} h={11} sw={1.200}><path d="M.6 0v11M16.400 0v11M3.600.6h9.800v9.800H3.600z" /></Ic></button>
      <span className="ml-3 h-6 w-px bg-[#e2e3e8]" />
      <label className="ml-4 flex w-[99px] items-center">
        <select aria-label="頁面" className="w-full appearance-none text-sm outline-none"><option>頁-1</option></select>
        <Caret />
      </label>
      <span className="ml-[13px] h-6 w-px bg-[#e2e3e8]" />
      <button className="ml-3.5" aria-label="新增頁面"><Ic w={12} sw={1.200}><path d="M6 0v12M0 6h12" /></Ic></button>
      <span className="ml-3.5 h-6 w-px bg-[#e2e3e8]" />
      <button className="ml-[22px] text-sm font-bold text-[#0080ff]">頁-1</button>
      <span className="ml-[22px] h-6 w-px bg-[#e2e3e8]" />
      <div className="ml-auto flex items-center">
        <span className="h-6 w-px bg-[#e2e3e8]" />
        <span className="w-[83px] text-center">形狀數量：4</span>
        <span className="h-6 w-px bg-[#e2e3e8]" />
        <span className="w-[86px] text-center">形狀ID：114</span>
        <span className="h-6 w-px bg-[#e2e3e8]" />
        <button className="ml-3 flex items-center gap-[3px]" aria-label="圖層">
          <Ic w={18} sw={1.200}><path d="M9 1.500l8 5-8 5.500-8-5.500zM1 10.500L9 16l8-5.500" /></Ic>
          <Caret className="text-[#8c8c8c]" />
        </button>
        <button className="ml-4 flex items-center gap-2">
          <Ic w={16} sw={1.200}><path d="M4.500 1.500h-3v13h3M11.500 1.500h3v3M11.500 14.500h3v-3M5.500 4.500h3.500l1.500 1.500v5.500h-5z" /></Ic>
          專注
        </button>
        <button className="ml-[13px]" aria-label="播放"><Ic w={16} sw={1.200}><circle cx="8" cy="8" r="7.300" /><path d="M6.300 5l4.200 3-4.200 3z" /></Ic></button>
        <span className="ml-3 h-6 w-px bg-[#e2e3e8]" />
        <button className="ml-2.5" aria-label="縮小"><Ic w={11} sw={1.200}><path d="M0 5.500h11" /></Ic></button>
        <input
          type="range"
          aria-label="縮放"
          value={zoom}
          onChange={(e) => setZoom(Number(e.target.value))}
          className="ml-[11px] h-1 w-24 appearance-none rounded-full [&::-webkit-slider-thumb]:h-3 [&::-webkit-slider-thumb]:w-3 [&::-webkit-slider-thumb]:appearance-none [&::-webkit-slider-thumb]:rounded-full [&::-webkit-slider-thumb]:border-2 [&::-webkit-slider-thumb]:border-[#404040] [&::-webkit-slider-thumb]:bg-white"
          style={{ background: `linear-gradient(to right, #404040 ${zoom}%, #ffffff ${zoom}%)` }}
        />
        <button className="ml-[11px]" aria-label="放大"><Ic w={11} sw={1.200}><path d="M5.500 0v11M0 5.500h11" /></Ic></button>
        <button className="ml-[18px] flex items-center gap-2">100%<Caret className="text-[#8c8c8c]" /></button>
        <span className="ml-3 h-6 w-px bg-[#e2e3e8]" />
        <button className="ml-3.5" aria-label="導覽"><Ic w={16} sw={1.200}><path d="M1 3l4.500-1.500L10.500 3 15 1.500V13l-4.500 1.500L5.500 13 1 14.500zM5.500 1.500V13M10.500 3v11.500" /></Ic></button>
        <button className="ml-4" aria-label="全螢幕"><Ic w={16} sw={1.200}><path d="M5 1.500H1.500V5M11 1.500h3.500V5M5 14.500H1.500V11M11 14.500h3.500V11M5 5.500h6v5H5z" /></Ic></button>
      </div>
    </footer>
  );
};

const App: React.FC = () => {
  const [tab, setTab] = useState('開始');
  const [side, setSide] = useState('符號');

  return (
    <div className="flex h-screen flex-col overflow-hidden bg-white font-['Noto_Sans','Noto_Sans_CJK_TC',sans-serif]">
      <TitleBar />
      <MenuBar tab={tab} onTab={setTab} />
      <Ribbon />
      <div className="flex min-h-0 flex-1">
        <SideNav active={side} onSelect={setSide} />
        <SymbolPanel />
        <Canvas />
        <RightStrip />
        <FormatPanel />
      </div>
      <StatusBar />
    </div>
  );
};

export default App;
